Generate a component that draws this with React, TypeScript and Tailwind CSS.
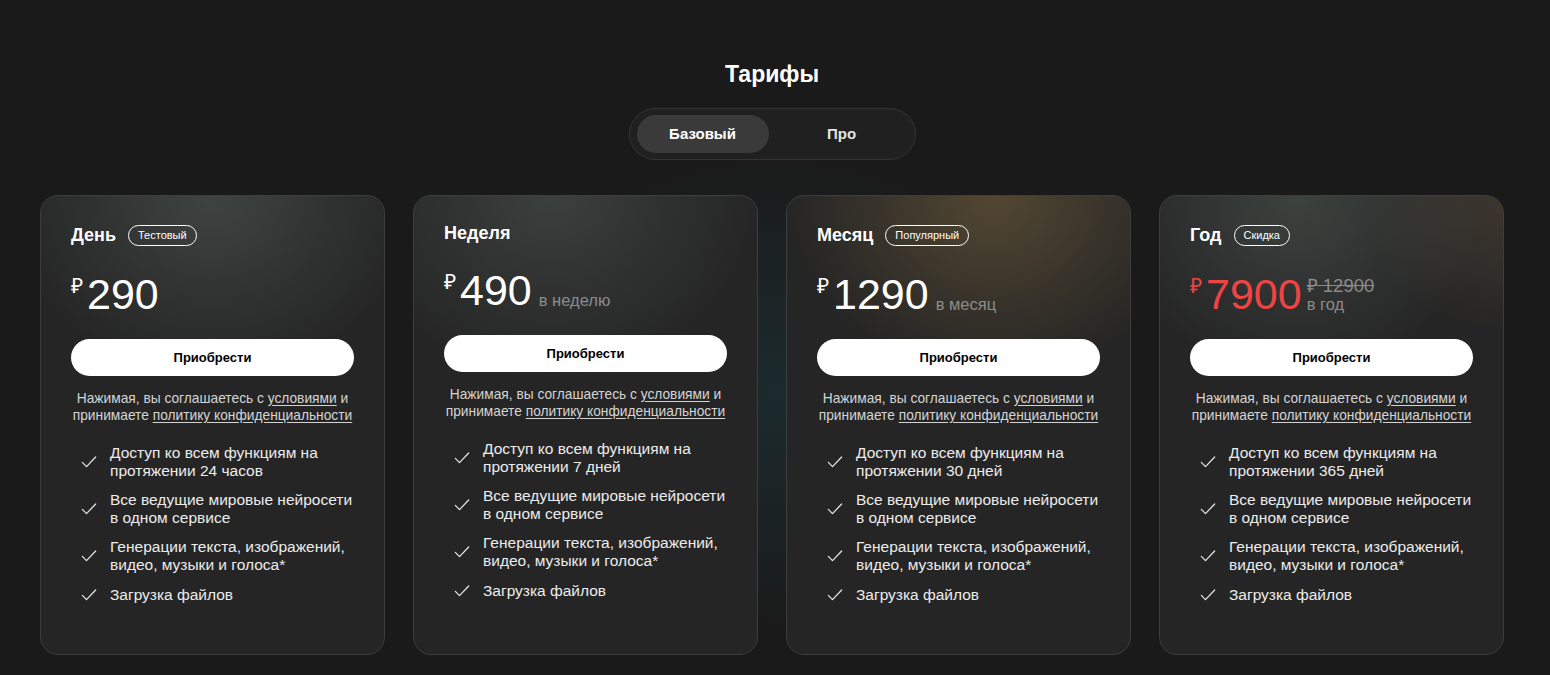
import React from "react";

const font = { fontFamily: '"Liberation Sans", Arial, sans-serif' };

function Check() {
  return (
    <svg width="20" height="20" viewBox="0 0 24 24" fill="none" stroke="#e6e6e6" strokeWidth="1.5" strokeLinecap="round" strokeLinejoin="round" className="shrink-0">
      <path d="M4 12.5l5 5L20 6" />
    </svg>
  );
}

type Plan = {
  title: string;
  badge?: string;
  price: string;
  per?: string;
  old?: string;
  red?: boolean;
  features: string[][];
  glow: string;
};

const plans: Plan[] = [
  {
    title: "День",
    badge: "Тестовый",
    price: "290",
    features: [
      ["Доступ ко всем функциям на", "протяжении 24 часов"],
      ["Все ведущие мировые нейросети", "в одном сервисе"],
      ["Генерации текста, изображений,", "видео, музыки и голоса*"],
      ["Загрузка файлов"],
    ],
    glow: "g1",
  },
  {
    title: "Неделя",
    price: "490",
    per: "в неделю",
    features: [
      ["Доступ ко всем функциям на", "протяжении 7 дней"],
      ["Все ведущие мировые нейросети", "в одном сервисе"],
      ["Генерации текста, изображений,", "видео, музыки и голоса*"],
      ["Загрузка файлов"],
    ],
    glow: "g2",
  },
  {
    title: "Месяц",
    badge: "Популярный",
    price: "1290",
    per: "в месяц",
    features: [
      ["Доступ ко всем функциям на", "протяжении 30 дней"],
      ["Все ведущие мировые нейросети", "в одном сервисе"],
      ["Генерации текста, изображений,", "видео, музыки и голоса*"],
      ["Загрузка файлов"],
    ],
    glow: "g3",
  },
  {
    title: "Год",
    badge: "Скидка",
    price: "7900",
    per: "в год",
    old: "₽ 12900",
    red: true,
    features: [
      ["Доступ ко всем функциям на", "протяжении 365 дней"],
      ["Все ведущие мировые нейросети", "в одном сервисе"],
      ["Генерации текста, изображений,", "видео, музыки и голоса*"],
      ["Загрузка файлов"],
    ],
    glow: "g4",
  },
];

function glowClass(g: string) {
  switch (g) {
    case "g1":
      return "bg-[radial-gradient(ellipse_60%_40%_at_50%_0%,rgba(110,125,118,0.35),transparent_100%)]";
    case "g2":
      return "bg-[radial-gradient(ellipse_60%_40%_at_40%_0%,rgba(110,125,118,0.3),transparent_100%)]";
    case "g3":
      return "bg-[radial-gradient(ellipse_60%_40%_at_60%_0%,rgba(145,118,66,0.42),transparent_100%)]";
    default:
      return "bg-[radial-gradient(ellipse_55%_40%_at_40%_0%,rgba(110,128,118,0.32),transparent_100%),radial-gradient(ellipse_40%_30%_at_100%_0%,rgba(120,95,70,0.3),transparent_100%)]";
  }
}

function Card({ p }: { p: Plan }) {
  const priceColor = p.red ? "text-[#ef4444]" : "text-white";
  return (
    <div className="relative w-[345px] h-[460px] rounded-[18px] border-[1.5px] border-[#3d3d3d] bg-[#252525] overflow-hidden">
      <div className={`absolute inset-0 ${glowClass(p.glow)}`} />
      <div className="relative flex flex-col px-[30px] pt-[27px]">
        <div className="flex items-center gap-[12px]">
          <span className="text-[18px] leading-[21px] font-bold text-white">{p.title}</span>
          {p.badge && (
            <span className="my-[2px] h-[21px] px-[9px] rounded-full border border-white text-white text-[11px] leading-[19px]">
              {p.badge}
            </span>
          )}
        </div>
        <div className="mt-[25px] flex items-end">
          <span className={`${priceColor} text-[21px] leading-none self-start mt-[2px]`}>₽</span>
          <span className={`${priceColor} text-[43px] leading-none ml-[4px]`}>{p.price}</span>
          {p.per && !p.old && (
            <span className="ml-[7px] text-[16.5px] leading-[18px] text-[#8b8b8b] mb-[3px]">{p.per}</span>
          )}
          {p.old && (
            <span className="ml-[5px] flex flex-col mb-[3px]">
              <span className="text-[18.5px] leading-[19px] text-[#8b8b8b] line-through">{p.old}</span>
              <span className="text-[16.5px] leading-[18px] text-[#8b8b8b]">{p.per}</span>
            </span>
          )}
        </div>
        <button className="mt-[23px] h-[37px] w-full rounded-full bg-white text-black text-[13px] font-bold">
          Приобрести
        </button>
        <p className="mt-[14px] text-center text-[13.75px] leading-[17px] text-[#d4d4d4] whitespace-nowrap">
          Нажимая, вы соглашаетесь с <span className="underline underline-offset-2">условиями</span> и
          <br />
          принимаете <span className="underline underline-offset-2">политику конфиденциальности</span>
        </p>
        <ul className="mt-[20px] flex flex-col gap-[11px] pl-[8px]">
          {p.features.map((f, i) => (
            <li key={i} className="flex items-center gap-[11px]">
              <Check />
              <span className="text-[15.5px] leading-[18px] text-[#ececec] whitespace-nowrap">
                {f.map((l, j) => (
                  <React.Fragment key={j}>
                    {l}
                    {j < f.length - 1 && <br />}
                  </React.Fragment>
                ))}
              </span>
            </li>
          ))}
        </ul>
      </div>
    </div>
  );
}

export default function App() {
  return (
    <div
      style={font}
      className="w-full min-h-[675px] bg-[#1a1a1a] bg-[radial-gradient(ellipse_18%_35%_at_50%_58%,rgba(30,62,68,0.45),transparent_100%)] flex flex-col items-center pt-[60px] pr-[6px]"
    >
      <h1 className="text-[23px] leading-[28px] font-bold text-white">Тарифы</h1>
      <div className="mt-[20px] w-[287px] h-[52px] rounded-full border border-[#333] bg-[#202020] flex items-center px-[7px] gap-[7px]">
        <div className="w-[132px] h-[38px] rounded-full bg-[#3a3a3a] flex items-center justify-center text-white text-[15px] font-bold">
          Базовый
        </div>
        <div className="w-[132px] h-[38px] rounded-full flex items-center justify-center text-[#e4e4e4] text-[15px] font-bold">
          Про
        </div>
      </div>
      <div className="mt-[35px] flex gap-[28px]">
        {plans.map((p) => (
          <Card key={p.title} p={p} />
        ))}
      </div>
    </div>
  );
}
